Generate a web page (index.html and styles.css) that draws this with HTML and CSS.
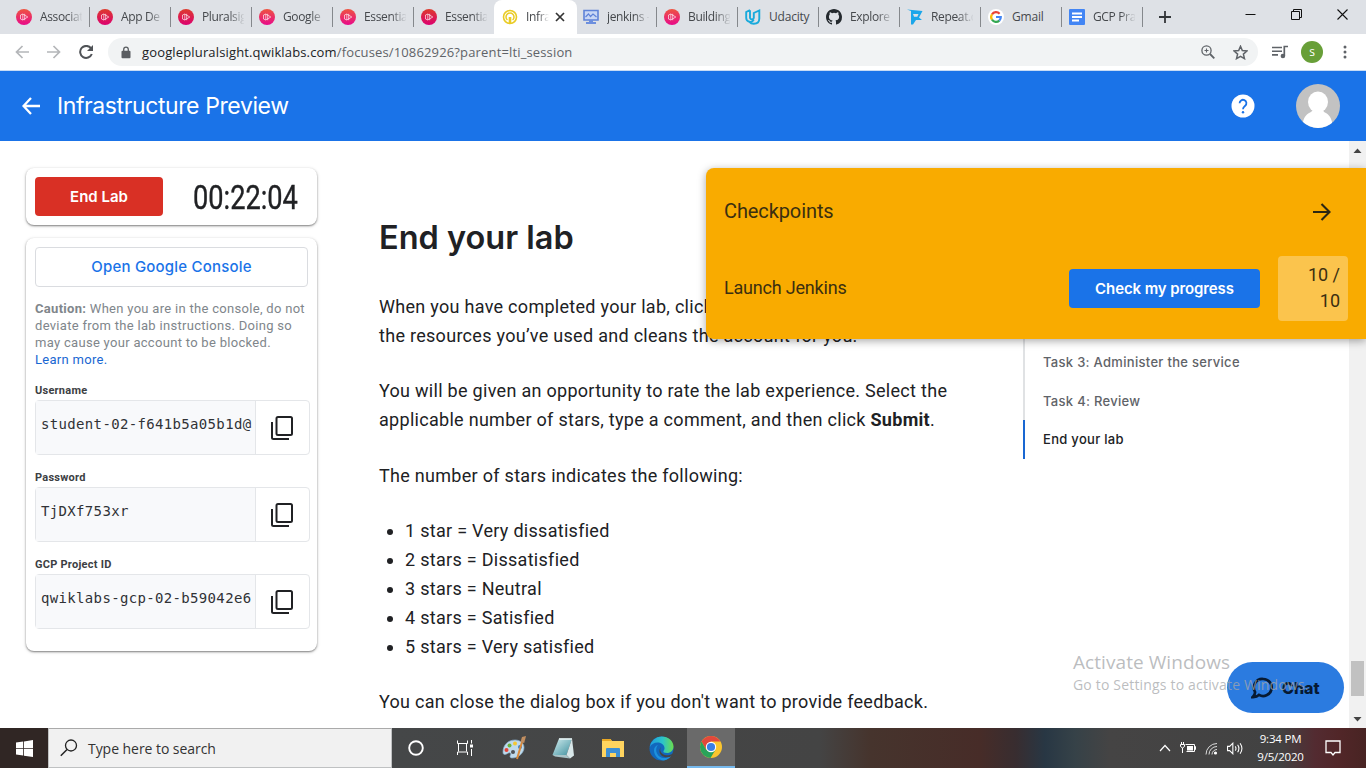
FILE: index.html
```html
<!DOCTYPE html>
<html lang="en">
<head>
<meta charset="utf-8">
<title>Infrastructure Preview</title>
<link rel="stylesheet" href="styles.css">
</head>
<body>
<svg class="defs" width="0" height="0">
  <defs>
    <linearGradient id="pink" x1="0" y1="0" x2="0" y2="1"><stop offset="0" stop-color="#ee5540"/><stop offset="1" stop-color="#e80a8a"/></linearGradient>
    <linearGradient id="red" x1="0" y1="0" x2="0" y2="1"><stop offset="0" stop-color="#dd3b2c"/><stop offset="1" stop-color="#dc0070"/></linearGradient>
    <linearGradient id="pad" x1="0" y1="0" x2="1" y2="1"><stop offset="0" stop-color="#d5eef0"/><stop offset="1" stop-color="#3f919f"/></linearGradient>
    <linearGradient id="edgeTop" x1="0" y1="0" x2="1" y2="0"><stop offset="0" stop-color="#1f9ce0"/><stop offset=".55" stop-color="#2cc5c8"/><stop offset="1" stop-color="#6bdd4c"/></linearGradient>
    <symbol id="ps-mark" viewBox="0 0 16 16"><path d="M4.500 6v4M6.800 5v6l5-3zM8.700 4.800v6.400M4.500 6l2.300-1M4.500 10l2.300 1" fill="none" stroke="#fff" stroke-opacity=".8" stroke-width=".8"/></symbol>
    <symbol id="ps-a" viewBox="0 0 16 16"><circle cx="8" cy="8" r="8" fill="url(#pink)"/><use href="#ps-mark" width="16" height="16"/></symbol>
    <symbol id="ps-b" viewBox="0 0 16 16"><circle cx="8" cy="8" r="8" fill="url(#red)"/><use href="#ps-mark" width="16" height="16"/></symbol>
    <symbol id="copy" viewBox="0 0 24 26"><path d="M8 2h12.500a1.500 1.500 0 0 1 1.500 1.500v15a1.500 1.500 0 0 1-1.500 1.500H8a1.500 1.500 0 0 1-1.500-1.500v-15A1.500 1.500 0 0 1 8 2z" fill="none" stroke="#202124" stroke-width="2"/><path d="M2 7v15.500A1.500 1.500 0 0 0 3.500 24H19" fill="none" stroke="#202124" stroke-width="2"/></symbol>
  </defs>
</svg>

<div class="tabs">
  <div class="tab"><svg class="fav"><use href="#ps-a"/></svg><span>Associat</span></div>
  <div class="tab"><svg class="fav"><use href="#ps-b"/></svg><span>App De</span></div>
  <div class="tab"><svg class="fav"><use href="#ps-b"/></svg><span>Pluralsig</span></div>
  <div class="tab"><svg class="fav"><use href="#ps-a"/></svg><span>Google</span></div>
  <div class="tab"><svg class="fav"><use href="#ps-a"/></svg><span>Essentia</span></div>
  <div class="tab no-line"><svg class="fav"><use href="#ps-b"/></svg><span>Essentia</span></div>
  <div class="tab active">
    <svg class="fav" viewBox="0 0 16 16"><circle cx="8" cy="8" r="6.500" fill="none" stroke="#e9cb24" stroke-width="1.600"/><path d="M5.400 11a4 4 0 1 1 5.200 0" fill="none" stroke="#e9cb24" stroke-width="1.500"/><path d="M8 8v6" stroke="#e9cb24" stroke-width="2.600"/></svg>
    <span>Infra</span>
    <svg class="x" viewBox="0 0 10 10"><path d="M1 1l8 8M9 1l-8 8" stroke="#333" stroke-width="1.700"/></svg>
  </div>
  <div class="tab"><svg class="fav" viewBox="0 0 16 16"><path d="M1 1.500h14v9.500H1z" fill="#c9d7f5" stroke="#5f83d8" stroke-width="1.600"/><path d="M2.500 8l3-3 2 2.500L10 5l3.500 3" fill="none" stroke="#5f83d8" stroke-width="1.200"/><path d="M6 11h4v2h3v2H3v-2h3z" fill="#6d8fde"/></svg><span>jenkins -</span></div>
  <div class="tab"><svg class="fav"><use href="#ps-a"/></svg><span>Building</span></div>
  <div class="tab"><svg class="fav" viewBox="0 0 16 16"><path d="M5 1.200L1.200 3v6a4 4 0 0 0 7.600 1.600M5 1.200V9a2 2 0 0 0 3.800 0V4l5.500-2.500V9.500c0 3.500-2.500 5.300-5.500 5.300-2 0-3.500-.8-4-1.600" fill="none" stroke="#19aadc" stroke-width="1.900"/></svg><span>Udacity</span></div>
  <div class="tab"><svg class="fav" viewBox="0 0 16 16"><path fill="#24292e" d="M8 0C3.580 0 0 3.580 0 8c0 3.540 2.290 6.530 5.470 7.590.4.070.55-.17.55-.38 0-.19-.01-.82-.01-1.490-2.010.37-2.530-.49-2.690-.94-.09-.23-.48-.94-.82-1.130-.28-.15-.68-.52-.01-.53.63-.01 1.080.58 1.230.82.72 1.210 1.870.87 2.330.66.07-.52.28-.87.51-1.070-1.780-.2-3.640-.89-3.640-3.950 0-.87.31-1.590.82-2.150-.08-.2-.36-1.020.08-2.120 0 0 .67-.21 2.200.82a7.600 7.600 0 0 1 4 0c1.530-1.040 2.200-.82 2.200-.82.44 1.100.16 1.920.08 2.120.51.56.82 1.270.82 2.150 0 3.070-1.870 3.750-3.650 3.950.29.25.54.73.54 1.480 0 1.070-.01 1.930-.01 2.200 0 .21.15.46.55.38A8 8 0 0 0 16 8c0-4.420-3.580-8-8-8z"/></svg><span>Explore</span></div>
  <div class="tab"><svg class="fav" viewBox="0 0 16 16"><path d="M0 .5l4 1.500v13.500h2L9 11h6l-3-2.500L15.500 2z" fill="#1ba6ea"/><path d="M6 5h5.500L10.300 7.800H7z" fill="#dee1e6"/></svg><span>Repeat.c</span></div>
  <div class="tab"><svg class="fav" viewBox="0 0 16 16"><circle cx="8" cy="8" r="8" fill="#fff"/><g fill="none" stroke-width="2.200"><path d="M11.600 4.700A4.800 4.800 0 0 0 4 5.300" stroke="#ea4335"/><path d="M4 5.300a4.800 4.800 0 0 0 0 5.400" stroke="#fbbc05"/><path d="M4 10.700a4.800 4.800 0 0 0 7.300.9" stroke="#34a853"/><path d="M11.300 11.600A4.800 4.800 0 0 0 12.800 8H8" stroke="#4285f4"/></g></svg><span>Gmail</span></div>
  <div class="tab"><svg class="fav" viewBox="0 0 16 16"><rect width="16" height="16" rx="1" fill="#4285f4"/><path d="M3 4.500h10M3 8h10M3 11.500h7" stroke="#fff" stroke-width="1.800"/></svg><span>GCP Pra</span></div>
  <svg class="plus" viewBox="0 0 12 12"><path d="M6 0v12M0 6h12" stroke="#333639" stroke-width="1.800"/></svg>
  <div class="wincontrols">
    <svg width="11" height="11" viewBox="0 0 11 11"><path d="M.5 5.500h10" stroke="#111"/></svg>
    <svg width="11" height="11" viewBox="0 0 11 11"><path d="M.5 2.500h8v8h-8zM2.500 2.500v-2h8v8h-2" fill="none" stroke="#111"/></svg>
    <svg width="11" height="11" viewBox="0 0 11 11"><path d="M.5.5l10 10M10.500.5l-10 10" stroke="#111" stroke-width="1.100"/></svg>
  </div>
</div>

<div class="toolbar">
  <svg class="nav" viewBox="0 0 14 14"><path d="M14 7H1.500M7.500 1L1.500 7l6 6" fill="none" stroke="#b4b6b9" stroke-width="1.700"/></svg>
  <svg class="nav" viewBox="0 0 14 14"><path d="M0 7h12.500M6.500 1l6 6-6 6" fill="none" stroke="#b4b6b9" stroke-width="1.700"/></svg>
  <svg class="nav" viewBox="0 0 14 14"><path d="M11.900 3.200A6 6 0 1 0 12.800 9" fill="none" stroke="#505357" stroke-width="2"/><path d="M14 0v6H8z" fill="#505357"/></svg>
  <div class="omnibox">
    <svg class="lock" viewBox="0 0 10 12"><rect x=".5" y="4.300" width="9" height="7.500" rx="1" fill="#5a5d61"/><path d="M2.700 5V3a2.300 2.300 0 0 1 4.600 0v2" fill="none" stroke="#5a5d61" stroke-width="1.300"/></svg>
    <div class="url">googlepluralsight.qwiklabs.com<span>/focuses/10862926?parent=lti_session</span></div>
    <svg class="mag" viewBox="0 0 14 14"><circle cx="5.500" cy="5.500" r="4.600" fill="none" stroke="#5f6368" stroke-width="1.300"/><path d="M9 9l4.300 4.300" stroke="#5f6368" stroke-width="1.800"/><path d="M3.500 5.500h4M5.500 3.500v4" stroke="#5f6368" stroke-width="1.100"/></svg>
    <svg class="star" viewBox="0 0 14 14"><path d="M7 1.200l1.700 4 4.300.4-3.300 2.900 1 4.200L7 10.500l-3.700 2.200 1-4.200L1 5.600l4.300-.4z" fill="none" stroke="#5f6368" stroke-width="1.400"/></svg>
  </div>
  <svg class="queue" viewBox="0 0 16 14"><path d="M0 2.500h10M0 6.200h10M0 9.900h6" stroke="#5f6368" stroke-width="1.600"/><path d="M12.300 11V1.500H16" fill="none" stroke="#5f6368" stroke-width="1.700"/><circle cx="10.900" cy="11" r="2.300" fill="#5f6368"/></svg>
  <div class="avatar-s">s</div>
  <svg class="dots" viewBox="0 0 4 14"><circle cx="2" cy="2" r="1.500"/><circle cx="2" cy="7" r="1.500"/><circle cx="2" cy="12" r="1.500"/></svg>
</div>

<header class="appbar">
  <svg class="back" viewBox="0 0 18 18"><path d="M18 9H1.800M9 1L1.500 9 9 17" fill="none" stroke="#fff" stroke-width="2.300"/></svg>
  <h1><span>Infrastructure Preview</span></h1>
  <svg class="help" viewBox="0 0 24 24"><circle cx="12" cy="12" r="11.500" fill="#fff"/><path d="M8.600 9.300a3.400 3.400 0 1 1 5.600 2.500C12.900 12.900 12 13.500 12 15.200" fill="none" stroke="#1a73e8" stroke-width="1.800"/><circle cx="12" cy="18.200" r="1.200" fill="#1a73e8"/></svg>
  <svg class="user" viewBox="0 0 44 44"><clipPath id="round"><circle cx="22" cy="22" r="22"/></clipPath><g clip-path="url(#round)"><rect width="44" height="44" fill="#c2c2c2"/><ellipse cx="22" cy="18" rx="10" ry="10.500" fill="#fff"/><path d="M17 26h10l1 2c4 1.500 7 5 8 10v8H7v-8c1-5 4-8.500 8-10z" fill="#fff"/></g></svg>
</header>

<div class="page">
  <aside>
    <section class="card timer-card">
      <button class="end">End Lab</button>
      <div class="timer"><span>00:22:04</span></div>
    </section>
    <section class="card creds">
      <button class="console">Open Google Console</button>
      <p class="caution"><b>Caution:</b> When you are in the console, do not<br>deviate from the lab instructions. Doing so<br>may cause your account to be blocked.<br><a>Learn more.</a></p>
      <label>Username</label>
      <div class="field"><code>student-02-f641b5a05b1d@</code><svg><use href="#copy"/></svg></div>
      <label>Password</label>
      <div class="field"><code>TjDXf753xr</code><svg><use href="#copy"/></svg></div>
      <label>GCP Project ID</label>
      <div class="field"><code>qwiklabs-gcp-02-b59042e6</code><svg><use href="#copy"/></svg></div>
    </section>
  </aside>
  <main>
    <h2>End your lab</h2>
    <p>When you have completed your lab, click <b>End Lab</b>. Qwiklabs removes<br>the resources you’ve used and cleans the account for you.</p>
    <p>You will be given an opportunity to rate the lab experience. Select the<br>applicable number of stars, type a comment, and then click <b>Submit</b>.</p>
    <p>The number of stars indicates the following:</p>
    <ul><li>1 star = Very dissatisfied</li><li>2 stars = Dissatisfied</li><li>3 stars = Neutral</li><li>4 stars = Satisfied</li><li>5 stars = Very satisfied</li></ul>
    <p>You can close the dialog box if you don't want to provide feedback.</p>
  </main>
  <nav class="toc">
    <a class="t3">Task 3: Administer the service</a>
    <a class="t4">Task 4: Review</a>
    <a class="on">End your lab</a>
  </nav>
  <div class="scroll">
    <svg width="9" height="5" viewBox="0 0 9 5"><path d="M.5 5L4.500.5 8.500 5z" fill="#444"/></svg>
    <div class="thumb"></div>
    <svg width="9" height="5" viewBox="0 0 9 5"><path d="M.5 0l4 4.500L8.500 0z" fill="#444"/></svg>
  </div>
  <section class="checks">
    <div class="row head"><span>Checkpoints</span>
      <svg width="20" height="20" viewBox="0 0 20 20"><path d="M1 10h16.500M9.500 2l8 8-8 8" fill="none" stroke="#2b2713" stroke-width="2.100"/></svg></div>
    <div class="row"><span class="jenkins">Launch Jenkins</span><button class="progress">Check my progress</button><div class="score">10 /<br>10</div></div>
  </section>
  <div class="chat">
    <svg width="22" height="22" viewBox="0 0 22 22"><path d="M12 2a8.500 8.500 0 1 1-4 15.900c-1.500 1.600-3.600 2.300-6.300 2.200 1.600-1.300 2.300-3 2.400-5A8.600 8.600 0 0 1 12 2z" fill="none" stroke="#071a33" stroke-width="2.700"/></svg>
    <span>Chat</span>
  </div>
  <div class="watermark"><div class="w1">Activate Windows</div><div class="w2">Go to Settings to activate Windows.</div></div>
</div>

<footer class="taskbar">
  <div class="start"><svg width="17" height="17" viewBox="0 0 17 17"><path d="M0 2.500L7.200 1.500V8H0zM8 1.400L17 0v8H8zM0 8.800h7.200v6.700L0 14.500zM8 8.800h9V17l-9-1.300z" fill="#fff"/></svg></div>
  <div class="search"><svg width="18" height="18" viewBox="0 0 18 18"><circle cx="11" cy="6.500" r="5.500" fill="none" stroke="#222" stroke-width="1.300"/><path d="M7 10.500L.8 16.800" stroke="#222" stroke-width="1.500"/></svg><span>Type here to search</span></div>
  <div class="apps">
    <div><svg width="18" height="18" viewBox="0 0 18 18"><circle cx="9" cy="9" r="6.800" fill="none" stroke="#fff" stroke-width="1.900"/></svg></div>
    <div><svg width="18" height="18" viewBox="0 0 18 18"><path d="M1.500 1.500v3h10v-3M1.500 16v-3h10v3M2.500 4.500v8M10.500 4.500v8M15.500 1v3.500M15.500 10v7" fill="none" stroke="#fff"/><path d="M14 5.500h3v3h-3z" fill="#fff"/></svg></div>
    <div><svg width="26" height="26" viewBox="0 0 26 26"><path d="M2 17c0-7 5-12 12-12 5 0 9 3 9 7.500 0 5-5 10.500-12 10.500-2 0-2.500-1.500-1.500-3 1-2-1-3-3-1.500C4 20 2 20 2 17z" fill="#bfdaec" stroke="#87aeca" stroke-width=".7"/><circle cx="5.500" cy="15" r="2" fill="#e14438"/><circle cx="8.500" cy="10.500" r="2" fill="#6bb23f"/><circle cx="14" cy="8.500" r="2" fill="#f4c733"/><circle cx="19" cy="12" r="2" fill="#397fc7"/><circle cx="12" cy="17" r="2" fill="#505257"/><path d="M16 24l5-17" stroke="#d9893b" stroke-width="2"/><path d="M19.500 7l1.500-5 4-1-1.800 7z" fill="#c18e60"/></svg></div>
    <div><svg width="24" height="24" viewBox="0 0 24 24"><path d="M8 2.500h13L15.500 19H1.500z" fill="url(#pad)"/><path d="M21 2.500l2 17-4 3-3.500-3.500z" fill="#d8e7e9"/><path d="M1.500 19h14l3.500 3.500L4 20.500z" fill="#a9c4c8"/><path d="M8 3h13" stroke="#e9f2f3" stroke-width="1.500"/></svg></div>
    <div><svg width="22" height="20" viewBox="0 0 22 20"><path d="M0 1h8.500l1.500 2h12v16H0z" fill="#ffd45f"/><path d="M0 1h8.500l1.300 2H0z" fill="#e9a824"/><path d="M4 19v-8a1 1 0 0 1 1-1h12a1 1 0 0 1 1 1v8h-4v-4H8v4z" fill="#3e8fd3"/></svg></div>
    <div><svg width="25" height="25" viewBox="0 0 25 25"><circle cx="12.500" cy="12.500" r="12" fill="#1268bd"/><path d="M.8 11A12 12 0 0 1 12.500.5c7 0 12 4.600 12 10 0 4-3 6.500-6.500 6.500-3 0-4-1-3.500-2 1-1.500 1-2 1-3 0-3-3-5.500-7-5.500C5 6.500 2.500 8.200.8 11z" fill="url(#edgeTop)"/><path d="M9 9c-2 2-2.500 5.500-1 8.500 2.500 5 8 6.500 15 1.500a12 12 0 0 1-8 5.400C10 24.500 5 20 5 14.500 5 11.500 6.500 9.700 9 9z" fill="#1d91dd"/><path d="M12 11c-1.500 2-1 5 1.500 6.800 3.200 2.400 7.500 1.800 10.500-.2l-1.500 2.700c-2.500 1.200-5 1.300-7.500.5-4.500-1.300-6-6.300-3-9.800z" fill="#444"/></svg></div>
    <div class="current"><svg width="22" height="22" viewBox="0 0 22 22"><circle cx="11" cy="11" r="11" fill="#fbc52e"/><path d="M1.500 5.500A11 11 0 0 1 20.500 5.500H11L6.200 13.700z" fill="#e1483c"/><path d="M1.500 5.500A11 11 0 0 0 10.500 22l5-8.300L11 16l-4.800-2.300z" fill="#29a35a"/><circle cx="11" cy="11" r="5.200" fill="#fff"/><circle cx="11" cy="11" r="4.100" fill="#3b7ee4"/></svg></div>
  </div>
  <div class="tray">
    <svg width="12" height="8" viewBox="0 0 12 8"><path d="M1 7l5-5.500L11 7" fill="none" stroke="#fff" stroke-width="1.200"/></svg>
    <svg width="16" height="12" viewBox="0 0 16 12"><path d="M5.500 2.500h9v7h-8M14.500 4.500h1v3h-1" fill="none" stroke="#fff"/><path d="M7 4h6v4.500H7z" fill="#fff"/><path d="M1.500 0v2.500M3.500 0v2.500M.5 2.500h4v2L2.500 6 .5 4.500zM2.500 6v5" fill="none" stroke="#fff"/></svg>
    <svg width="13" height="13" viewBox="0 0 13 13"><g fill="none" stroke="#ddd"><path d="M1 12.500A11 11 0 0 1 12 1.500M4 12.500a8 8 0 0 1 8-8M7 12.500a5 5 0 0 1 5-5"/></g><circle cx="10.500" cy="11" r="1.600" fill="#fff"/></svg>
    <svg width="17" height="13" viewBox="0 0 16 12"><path d="M.5 4v4h2L5.500 11V1L2.500 4z" fill="none" stroke="#fff"/><path d="M7.800 4q1.300 2 0 4M10 2.500q2.400 3.500 0 7M12.300 1q3.500 5 0 10" fill="none" stroke="#fff"/></svg>
    <div class="clock"><span>9:34 PM</span><span>9/5/2020</span></div>
    <svg width="16" height="17" viewBox="0 0 16 17"><path d="M1 1h14v11.500H10L8 15l-2-2.500H1z" fill="none" stroke="#fff" stroke-width="1.300"/></svg>
  </div>
</footer>
</body>
</html>
```
FILE: styles.css
```css
* { box-sizing: border-box; }
body { margin: 0; width: 1366px; height: 768px; overflow: hidden; display: flex; flex-direction: column; background: #fff; font-family: Roboto, sans-serif; color: #202124; }
.defs { position: absolute; }
svg { flex: none; display: block; }
button { border: 0; padding: 0; font-family: Inter, sans-serif; border-radius: 4px; }

/* Browser tab strip */
.tabs { height: 34px; flex: none; background: #dee1e6; display: flex; align-items: center; padding-left: 9px; font: 12px "Open Sans", sans-serif; }
.tab { width: 81px; flex: none; height: 34px; display: flex; align-items: center; gap: 8px; padding-left: 7px; color: #45484c; background: linear-gradient(#85888c, #85888c) 80px 7px / 1px 20px no-repeat; }
.tab.no-line { background: none; }
.fav { width: 16px; height: 16px; }
.tab span { width: 42px; overflow: hidden; white-space: nowrap; letter-spacing: -.35px; line-height: 18px; -webkit-mask-image: linear-gradient(90deg, #000 27px, transparent 43px); mask-image: linear-gradient(90deg, #000 27px, transparent 43px); }
.tab:nth-child(10) span, .tab:nth-child(13) span { -webkit-mask-image: none; mask-image: none; letter-spacing: -.2px; }
.tab.active { background: #fff; border-radius: 8px 8px 0 0; margin: 0 -1px 0 -1px; width: 83px; padding-left: 8px; }
.tab.active span { width: 23px; -webkit-mask-image: linear-gradient(90deg, #000 12px, transparent 23px); mask-image: linear-gradient(90deg, #000 12px, transparent 23px); }
.x { width: 10px; height: 10px; margin-left: -2px; }
.plus { width: 12px; height: 12px; margin-left: 16px; }
.wincontrols { margin-left: auto; display: flex; gap: 35px; padding: 0 18px 6px 0; }

/* Address bar */
.toolbar { height: 37px; flex: none; display: flex; align-items: center; padding-left: 15px; border-bottom: 1px solid #c8dcf5; }
.nav { width: 14px; height: 14px; margin-right: 18px; }
.omnibox { width: 1150px; height: 28px; margin-left: -3px; background: #f1f3f4; border-radius: 14px; display: flex; align-items: center; padding-left: 13px; }
.lock { width: 10px; height: 13px; }
.url { flex: 1; margin-left: 11px; font: 13px/18px "Open Sans", sans-serif; letter-spacing: .15px; color: #202124; white-space: nowrap; }
.url span { color: #5f6368; }
.mag { width: 14px; height: 14px; margin-right: 18px; }
.star { width: 15px; height: 15px; margin-right: 10px; }
.queue { width: 16px; height: 14px; margin-left: 14px; }
.avatar-s { width: 22px; height: 22px; margin-left: 13px; border-radius: 50%; background: #689f38; color: #fff; font: 12px/21px "Open Sans", sans-serif; text-align: center; }
.dots { width: 4px; height: 14px; margin-left: 20px; fill: #5f6368; }

/* Blue application header */
.appbar { height: 70px; flex: none; background: #1a73e8; display: flex; align-items: center; padding: 0 26px 0 22px; }
.back { width: 18px; height: 18px; }
.appbar h1 { flex: 1; margin: 0 0 0 17px; font: 400 23px/30px Inter, sans-serif; letter-spacing: -.4px; color: #fff; white-space: nowrap; }
.help { width: 24px; height: 24px; margin-right: 41px; }
.user { width: 44px; height: 44px; }

.page { position: relative; height: 587px; flex: none; display: flex; overflow: hidden; }
aside { width: 291px; margin: 27px 0 0 26px; flex: none; }
.card { background: #fff; border-radius: 8px; box-shadow: 0 1px 2px rgba(0,0,0,.45), 0 1px 4px rgba(0,0,0,.12); padding: 9px; }
.timer-card { height: 57px; display: flex; margin-bottom: 13px; }
.end { width: 128px; height: 39px; background: #d93025; color: #fff; font-size: 15px; font-weight: 600; }
.timer { width: 105px; margin-left: 30px; font-size: 34px; line-height: 40px; white-space: nowrap; }
.timer span { display: inline-block; transform-origin: 0 50%; transform: scaleX(.8); -webkit-text-stroke: .4px #202124; }
.creds { height: 413px; }
.console { display: block; width: 273px; height: 40px; padding-bottom: 2px; border: 1px solid #dadce0; background: #fff; color: #1a73e8; font-size: 15px; font-weight: 500; letter-spacing: .2px; }
.caution { margin: 13px 0 16px; height: 68px; font-size: 13px; line-height: 17px; letter-spacing: .3px; color: #80868b; white-space: nowrap; }
.caution a { color: #1967d2; }
label { display: block; height: 16px; font-size: 11px; font-weight: 700; line-height: 13px; letter-spacing: .25px; color: #3c4043; }
.field { width: 275px; height: 55px; margin-bottom: 16px; border: 1px solid #e4e6e9; border-radius: 4px; display: flex; align-items: center; }
.field code { width: 220px; height: 53px; padding-left: 5px; background: #f8f9fb; border-right: 1px solid #e4e6e9; font: 14px/47px "DejaVu Sans Mono", monospace; letter-spacing: .34px; overflow: hidden; white-space: nowrap; color: #303236; }
.field svg { width: 24px; height: 26px; margin-left: 14px; }

main { width: 600px; margin: 77px 0 0 62px; flex: none; font-size: 18px; line-height: 28.900px; letter-spacing: .29px; white-space: nowrap; }
h2 { margin: 0 0 33px; height: 42px; font: 600 32.500px/40px Inter, sans-serif; letter-spacing: 0; }
main p { margin: 0 0 26.600px; }
main ul { margin: 0 0 26.600px; padding-left: 26px; }

.toc { width: 300px; flex: none; margin: 180px 0 0 44px; height: 138px; border-left: 2px solid #e0e2e4; font: 500 13px/18px Inter, sans-serif; letter-spacing: .3px; color: #5f6368; display: flex; flex-direction: column; }
.toc a { display: block; padding-left: 18px; height: 39px; }
.toc .t3 { margin-top: 32px; flex: none; }
.toc .on { margin-left: -2px; padding: 10px 0 0 18px; border-left: 2px solid #1967d2; color: #202124; flex: none; }
.toc .t4 { height: 28px; flex: none; }

.scroll { margin-left: auto; width: 17px; background: #f1f1f1; display: flex; flex-direction: column; align-items: center; padding: 7px 0 6px; }
.thumb { width: 13px; height: 35px; margin: auto 0 21px; background: #c1c1c1; }

/* Floating checkpoint panel */
.checks { position: absolute; left: 706px; top: 27px; width: 660px; height: 171px; padding: 24px 18px 0 18px; background: #f9ab00; border-radius: 8px 0 0 8px; box-shadow: 0 2px 8px rgba(0,0,0,.35); color: #3b2f10; }
.row { display: flex; align-items: center; height: 65px; font-size: 18px; }
.row.head { height: 40px; margin-bottom: 24px; font-size: 20px; letter-spacing: -.1px; justify-content: space-between; padding-right: 16px; }
.row.head span { padding-bottom: 2px; }
.jenkins { flex: 1; letter-spacing: -.2px; padding-bottom: 2px; }
.progress { width: 191px; height: 39px; background: #1a73e8; color: #fff; font-size: 15px; font-weight: 600; letter-spacing: -.1px; }
.score { width: 70px; height: 65px; margin-left: 18px; padding: 6px 8px; background: rgba(255,255,255,.3); border-radius: 4px; text-align: right; line-height: 26px; }

.chat { position: absolute; left: 1227px; top: 521px; width: 117px; height: 51px; border-radius: 26px; background: #2b7be0; display: flex; align-items: center; gap: 9px; padding-left: 24px; font: 800 16px/20px Inter, sans-serif; color: #071a33; }
.watermark { position: absolute; left: 1073px; top: 508px; color: rgba(165,167,170,.75); font-family: "Open Sans", sans-serif; white-space: nowrap; }
.w1 { font-size: 19px; line-height: 26px; letter-spacing: .07px; }
.w2 { font-size: 14px; line-height: 20px; letter-spacing: .18px; }

/* Desktop taskbar */
.taskbar { height: 40px; flex: none; display: flex; background: linear-gradient(90deg, #302624 0, #302624 48px, #454748 392px, #444 820px, #46342d 870px, #472c28 980px, #382d30 1016px, #283744 1045px, #364248 1075px, #454444 1110px, #424242 1280px, #532b31 1315px, #512628 1340px, #482423 1366px); color: #fff; }
.start { width: 48px; display: flex; align-items: center; justify-content: center; }
.search { width: 344px; background: #f1f1f1; border: 1px solid #bfc1c2; border-top-color: #aaa; display: flex; align-items: center; padding-left: 11px; gap: 10px; font: 14px/20px "Open Sans", sans-serif; letter-spacing: -.05px; color: #333; }
.search span { padding-top: 1px; }
.apps { display: flex; }
.apps div { width: 49px; display: flex; align-items: center; justify-content: center; }
.apps div:nth-child(-n+4) { padding-right: 2px; }
.apps .current { width: 48px; background: #6a6a6a; border-bottom: 2px solid #76b9ed; margin-left: 1px; }
.tray { margin-left: auto; display: flex; align-items: center; padding-right: 25px; gap: 9px; font: 11.500px/18px "Open Sans", sans-serif; }
.clock { width: 51px; display: flex; flex-direction: column; align-items: center; letter-spacing: -.2px; margin: 0 10px 0 2px; white-space: nowrap; }
```
